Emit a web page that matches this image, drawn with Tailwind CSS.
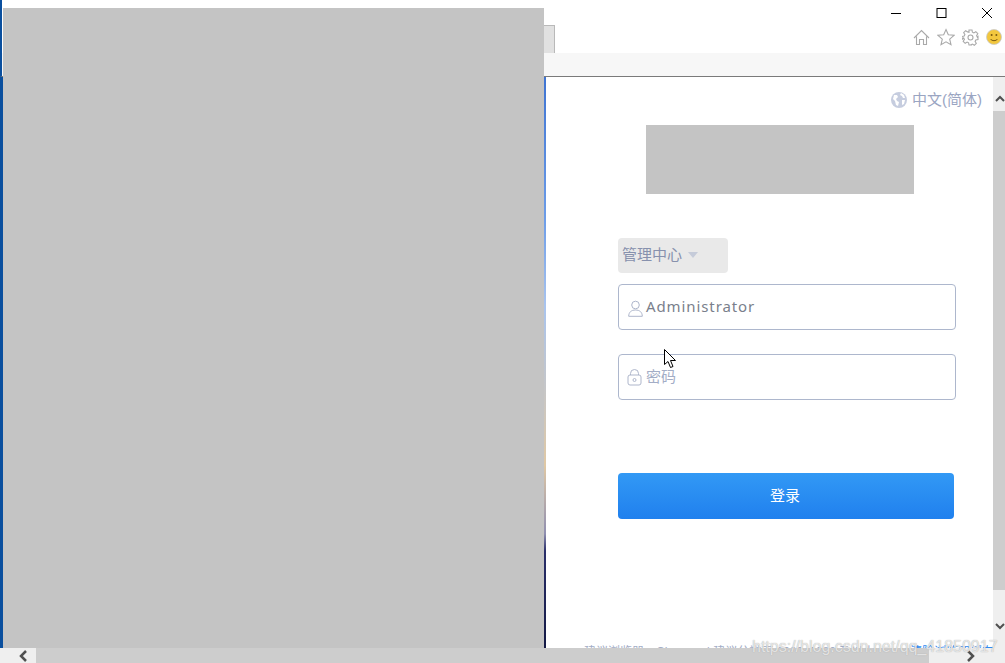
<!DOCTYPE html>
<html lang="zh-CN">
<head>
  <meta charset="UTF-8">
  <title>登录</title>
  <script src="https://cdn.jsdelivr.net/npm/@tailwindcss/browser@4"></script>
</head>
<body class="bg-white overflow-hidden font-['Liberation_Sans','Noto_Sans_CJK_SC',sans-serif]">
<div class="relative w-[1005px] h-[663px] overflow-hidden flex flex-col bg-white">

  <!-- browser title + tabs -->
  <div class="h-[53px] flex border-l-2 border-[#0a4f9e]">
    <div class="w-[553px] pl-[1px] pt-[25px] shrink-0">
      <div class="h-[28px] bg-[#e1e1e1] border border-b-0 border-[#b9b9b9]"></div>
    </div>
    <div class="flex-1 flex flex-col items-end">
      <div class="flex items-center h-[26px] pr-[12px] gap-[34px]">
        <svg class="w-[11px] h-[12px]" viewBox="0 0 11 12"><path d="M0 6.500h10" stroke="#000" stroke-width="1"/></svg>
        <svg class="w-[11px] h-[12px]" viewBox="0 0 11 12"><rect x="1" y="1.500" width="9" height="9" fill="none" stroke="#000"/></svg>
        <svg class="w-[12px] h-[12px]" viewBox="0 0 12 12"><path d="M1 1l10 10M11 1L1 11" stroke="#000" stroke-width="1"/></svg>
      </div>
      <div class="flex items-center h-[22px] pr-[3px] gap-[7px]">
        <svg class="w-[17px] h-[17px]" viewBox="0 0 17 17" fill="none" stroke="#a9a9a9" stroke-width="1.1"><path d="M1 9L8.500 1.500 16 9M3.500 7.500V15.500H6.500V10.500H10.500V15.500H13.500V7.500"/></svg>
        <svg class="w-[18px] h-[18px]" viewBox="0 0 18 18" fill="none" stroke="#a9a9a9" stroke-width="1.1"><path d="M9 1.500l2.300 5.200 5.700.6-4.300 3.800 1.300 5.600L9 13.800l-5 2.900 1.300-5.600L1 7.300l5.700-.6z"/></svg>
        <svg class="w-[17px] h-[17px]" viewBox="0 0 17 17" fill="none" stroke="#a9a9a9" stroke-width="1.1"><circle cx="8.500" cy="8.500" r="2.500"/><path d="M7 1h3l.4 2.200 1.500.7 1.900-1.200 2 2-1.200 1.900.7 1.500L16 7.500v3l-2.200.4-.7 1.500 1.200 1.900-2 2-1.900-1.200-1.500.7L10 16H7l-.4-2.200-1.500-.7-1.900 1.200-2-2 1.200-1.900-.7-1.500L0 10.500v-3l2.200-.4.7-1.500L1.700 3.700l2-2 1.900 1.200L7 3.200z"/></svg>
        <svg class="w-[16px] h-[16px]" viewBox="0 0 16 16"><circle cx="8" cy="8" r="7.500" fill="#f2c73e" stroke="#c9c9c9" stroke-width="0.8"/><circle cx="5.600" cy="6" r="1" fill="#7a5b10"/><circle cx="10.400" cy="6" r="1" fill="#7a5b10"/><path d="M4.500 10c1.500 2.200 5.500 2.200 7 0" fill="none" stroke="#7a5b10"/></svg>
      </div>
    </div>
  </div>

  <!-- command bar -->
  <div class="h-[24px] shrink-0 bg-[#f7f7f7] border-l-2 border-l-[#0a4f9e] border-b border-b-[#7a7a7a]"></div>

  <!-- page area -->
  <div class="flex-1 flex min-h-0">
    <div class="w-[546px] shrink-0 border-l-[3px] border-[#0a4f9e] bg-[linear-gradient(to_bottom,#3f74d2_0%,#6d9de8_25%,#a9c4ee_40%,#e0c8a4_68%,#8f8fb0_80%,#2a2f6a_83%,#141a45_100%)]"></div>

    <div class="flex-1 relative min-w-0 overflow-hidden bg-white">
      <div class="flex justify-end items-center h-[20px] mt-[13px] pr-[23px] gap-[5px] text-[15px] text-[#9aa5c2]">
        <svg class="w-[16px] h-[16px]" viewBox="0 0 16 16"><circle cx="8" cy="8" r="8" fill="#c6cddf"/><path d="M3 3l3 0 1 2-2 2 1 2 2 1-1 4-2-1-1-4-2-2zM10 1l3 2 1 3-2 0-1-2-2-1zM11 8l3 0-1 4-2 1z" fill="#fff"/></svg>
        <span>中文(简体)</span>
      </div>
      <div class="w-[268px] h-[69px] ml-[100px] mt-[15px] bg-[#c4c4c4]"></div>

      <div class="ml-[72px] w-[338px] mt-[44px]">
        <div class="w-[110px] h-[35px] rounded bg-[#e9e9e9] flex items-center pl-[4px] gap-[6px] text-[15px] text-[#8791ad]">
          <span>管理中心</span>
          <span class="w-0 h-0 border-x-[5px] border-x-transparent border-t-[6px] border-t-[#c5cbd9] mb-[1px]"></span>
        </div>
        <div class="h-[46px] mt-[11px] rounded border border-[#adb7cd] flex items-center pl-[9px] gap-[3px]">
          <svg class="w-[15px] h-[17px] mt-[2px]" viewBox="0 0 15 17" fill="none" stroke="#aeb6cb" stroke-width="1"><circle cx="7.500" cy="5" r="3.800"/><path d="M.7 16.300c0-4 2.500-6.300 6.800-6.300s6.800 2.300 6.800 6.300z"/></svg>
          <span class="text-[15px] tracking-[0.9px] mb-[2px] text-[#7a7f8c] font-['Noto_Sans',sans-serif]">Administrator</span>
        </div>
        <div class="h-[46px] mt-[24px] rounded border border-[#adb7cd] flex items-center pl-[8px] gap-[4px]">
          <svg class="w-[15px] h-[17px]" viewBox="0 0 15 17" fill="none" stroke="#aeb6cb" stroke-width="1"><rect x="1" y="6" width="13" height="10" rx="2"/><path d="M3.500 6V4.500a4 4 0 0 1 8 0V6"/><circle cx="7.500" cy="11" r="1.500"/></svg>
          <span class="text-[15px] text-[#a3adc6]">密码</span>
        </div>
        <button class="block w-[336px] h-[46px] mt-[73px] pr-[2px] rounded text-[15px] text-white bg-[linear-gradient(to_bottom,#3299f5,#2080ee)]">登录</button>
      </div>

      <!-- footer, cut off by the scrollbar -->
      <div class="absolute left-[38px] top-[566px] flex gap-[8px] text-[12px] whitespace-nowrap text-[#a3adc6]">
        <span>建议浏览器：Chrome</span>
        <span>| 建议分辨率 1920x1080 及以上</span>
        <span class="ml-[27px] text-[#2f8af0]">清除浏览器缓存</span>
      </div>

      <!-- vertical scrollbar -->
      <div class="absolute right-0 top-0 bottom-0 w-[12px] bg-[#efefef] flex flex-col items-center">
        <div class="h-[34px] shrink-0 flex items-center justify-center pt-[9px] pl-[2px]">
          <svg class="w-[10px] h-[7px]" viewBox="0 0 10 7"><path d="M1 6l4-4 4 4" fill="none" stroke="#505050" stroke-width="2"/></svg>
        </div>
        <div class="w-full h-[479px] shrink-0 bg-[#cdcdcd]"></div>
        <div class="flex-1 flex items-center justify-center pt-[14px] pl-[2px]">
          <svg class="w-[10px] h-[7px]" viewBox="0 0 10 7"><path d="M1 1l4 4 4-4" fill="none" stroke="#505050" stroke-width="2"/></svg>
        </div>
      </div>
    </div>
  </div>

  <!-- horizontal scrollbar -->
  <div class="h-[15px] shrink-0 bg-[#efefef] flex items-center pl-[18px]">
    <svg class="w-[10px] h-[12px]" viewBox="0 0 10 12"><path d="M8 1L3 6l5 5" fill="none" stroke="#505050" stroke-width="2.500"/></svg>
    <div class="w-[893px] h-full ml-[8px] bg-[#cdcdcd]"></div>
    <svg class="w-[10px] h-[12px] ml-[37px]" viewBox="0 0 10 12"><path d="M2 1l5 5-5 5" fill="none" stroke="#505050" stroke-width="2.500"/></svg>
  </div>

  <!-- redaction over the left side -->
  <div class="absolute left-[3px] top-[8px] w-[541px] h-[640px] bg-[#c4c4c4]"></div>

  <!-- csdn watermark -->
  <div class="absolute left-[752px] top-[635px] text-[16px] whitespace-nowrap text-white/70 [text-shadow:0_0_1px_#9a9a9a]">https://blog.csdn.net/qq_41850917</div>

  <!-- mouse cursor -->
  <svg class="absolute left-[664px] top-[349px] w-[13px] h-[20px]" viewBox="0 0 13 20"><path d="M.5.500V15.500L4 12.500 6.500 18.500 9 17.500 6.500 11.500H11.500z" fill="#fff" stroke="#000"/></svg>
</div>
</body>
</html>
